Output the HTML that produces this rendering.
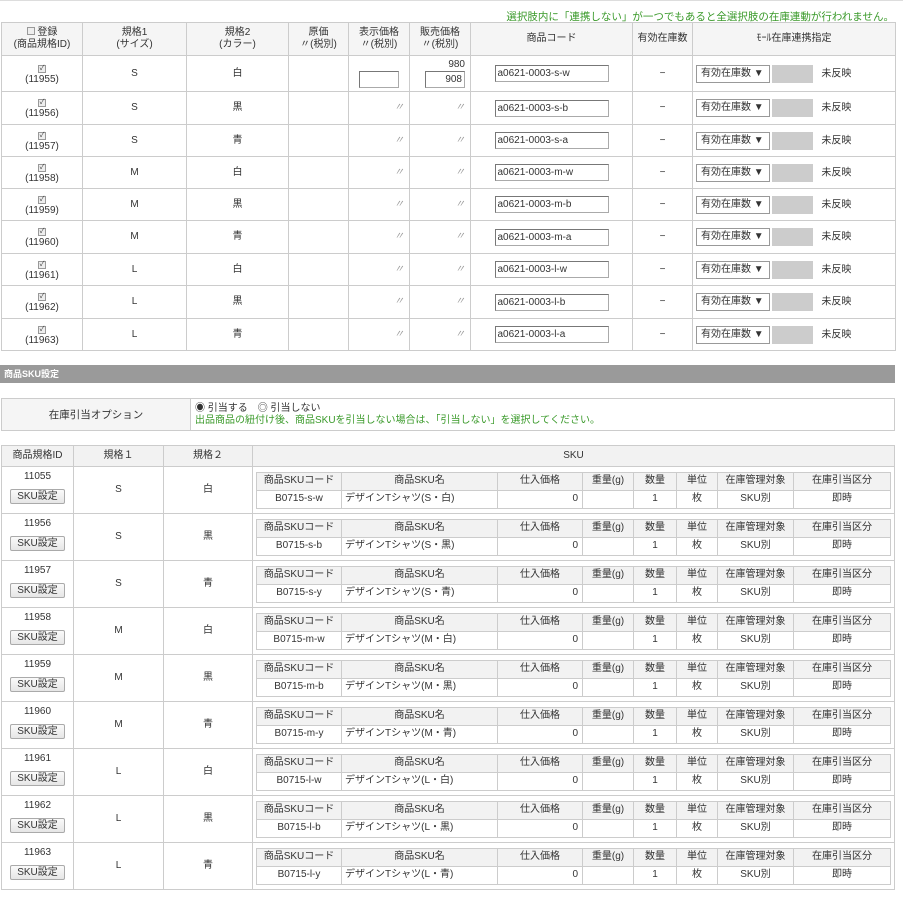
<!DOCTYPE html>
<html><head><meta charset="utf-8"><style>
*{box-sizing:border-box;margin:0;padding:0}
body{width:903px;height:900px;background:#fff;font-family:"Liberation Sans","Noto Sans CJK JP",sans-serif;font-size:10px;color:#333;position:relative;overflow:hidden}
table{border-collapse:collapse;table-layout:fixed;position:absolute}
td,th{border:1px solid #ccc;text-align:center;vertical-align:middle;font-weight:normal;line-height:12px}
.hl{position:absolute;left:0;top:0;width:903px;height:2px;border-top:1px solid #ddd}
.note{position:absolute;right:9px;top:9px;color:#3a9a2a;font-size:10.5px}
#t1 th{background:#f5f5f5}
.inp{display:inline-block;border:1px solid #aaa;border-top-color:#777;border-left-color:#777;background:#fff;height:17px;text-align:left;padding-left:2px;line-height:15px;font-size:10px;vertical-align:middle}
.sel{display:inline-block;width:74px;height:18px;border:1px solid #999;background:#fff;line-height:16px;padding-left:4px;text-align:left;vertical-align:middle}
.gray{display:inline-block;width:41px;height:18px;background:#ccc;vertical-align:middle;margin-left:2px}
.r{text-align:right;padding-right:5px;color:#999;font-style:italic}
.cb{display:inline-block;width:8px;height:8px;border:1px solid #999;background:#eee;font-size:7px;line-height:6px;color:#333}
.bar{position:absolute;left:0;top:365px;width:895px;height:18px;background:#9a9a9a;color:#fff;font-weight:bold;font-size:9px;line-height:18px;padding-left:4px}
#t3 th{background:#f2f2f2}
.in{position:static;width:634px;margin:0 auto 0 3px}
.in td{height:18px;border-color:#ccc}
.in tr:first-child td{background:#f2f2f2}
.btn{display:inline-block;border:1px solid #aaa;border-radius:2px;background:linear-gradient(#fafafa,#e6e6e6);padding:0 6px;height:15px;line-height:13px;font-size:10px;margin-top:6px}
</style></head><body>
<div class="hl"></div>
<div class="note">選択肢内に「連携しない」が一つでもあると全選択肢の在庫連動が行われません。</div>
<table id="t1" style="left:1px;top:22px;width:894px">
<colgroup><col style="width:81px"><col style="width:104px"><col style="width:102px"><col style="width:60px"><col style="width:61px"><col style="width:61px"><col style="width:162px"><col style="width:60px"><col style="width:203px"></colgroup>
<tr style="height:33px"><th><span class="cb"></span> 登録<br>(商品規格ID)</th><th>規格1<br>(サイズ)</th><th>規格2<br>(カラー)</th><th>原価<br>〃(税別)</th><th>表示価格<br>〃(税別)</th><th>販売価格<br>〃(税別)</th><th>商品コード</th><th>有効在庫数</th><th>ﾓｰﾙ在庫連携指定</th></tr>
<tr style="height:36px"><td><span class="cb">✓</span><br>(11955)</td><td>S</td><td>白</td><td></td><td><span class="inp" style="width:40px;margin-top:12px"></span></td><td style="text-align:right;padding-right:5px">980<br><span class="inp" style="width:40px;text-align:right;padding-right:2px">908</span></td><td><span class="inp" style="width:114px">a0621-0003-s-w</span></td><td>−</td><td style="text-align:left;padding-left:3px"><span class="sel">有効在庫数 ▼</span><span class="gray"></span>&nbsp;&nbsp;&nbsp;未反映</td></tr>
<tr style="height:33px"><td><span class="cb">✓</span><br>(11956)</td><td>S</td><td>黒</td><td></td><td class="r">〃</td><td class="r">〃</td><td><span class="inp" style="width:114px">a0621-0003-s-b</span></td><td>−</td><td style="text-align:left;padding-left:3px"><span class="sel">有効在庫数 ▼</span><span class="gray"></span>&nbsp;&nbsp;&nbsp;未反映</td></tr>
<tr style="height:32px"><td><span class="cb">✓</span><br>(11957)</td><td>S</td><td>青</td><td></td><td class="r">〃</td><td class="r">〃</td><td><span class="inp" style="width:114px">a0621-0003-s-a</span></td><td>−</td><td style="text-align:left;padding-left:3px"><span class="sel">有効在庫数 ▼</span><span class="gray"></span>&nbsp;&nbsp;&nbsp;未反映</td></tr>
<tr style="height:32px"><td><span class="cb">✓</span><br>(11958)</td><td>M</td><td>白</td><td></td><td class="r">〃</td><td class="r">〃</td><td><span class="inp" style="width:114px">a0621-0003-m-w</span></td><td>−</td><td style="text-align:left;padding-left:3px"><span class="sel">有効在庫数 ▼</span><span class="gray"></span>&nbsp;&nbsp;&nbsp;未反映</td></tr>
<tr style="height:32px"><td><span class="cb">✓</span><br>(11959)</td><td>M</td><td>黒</td><td></td><td class="r">〃</td><td class="r">〃</td><td><span class="inp" style="width:114px">a0621-0003-m-b</span></td><td>−</td><td style="text-align:left;padding-left:3px"><span class="sel">有効在庫数 ▼</span><span class="gray"></span>&nbsp;&nbsp;&nbsp;未反映</td></tr>
<tr style="height:33px"><td><span class="cb">✓</span><br>(11960)</td><td>M</td><td>青</td><td></td><td class="r">〃</td><td class="r">〃</td><td><span class="inp" style="width:114px">a0621-0003-m-a</span></td><td>−</td><td style="text-align:left;padding-left:3px"><span class="sel">有効在庫数 ▼</span><span class="gray"></span>&nbsp;&nbsp;&nbsp;未反映</td></tr>
<tr style="height:32px"><td><span class="cb">✓</span><br>(11961)</td><td>L</td><td>白</td><td></td><td class="r">〃</td><td class="r">〃</td><td><span class="inp" style="width:114px">a0621-0003-l-w</span></td><td>−</td><td style="text-align:left;padding-left:3px"><span class="sel">有効在庫数 ▼</span><span class="gray"></span>&nbsp;&nbsp;&nbsp;未反映</td></tr>
<tr style="height:33px"><td><span class="cb">✓</span><br>(11962)</td><td>L</td><td>黒</td><td></td><td class="r">〃</td><td class="r">〃</td><td><span class="inp" style="width:114px">a0621-0003-l-b</span></td><td>−</td><td style="text-align:left;padding-left:3px"><span class="sel">有効在庫数 ▼</span><span class="gray"></span>&nbsp;&nbsp;&nbsp;未反映</td></tr>
<tr style="height:32px"><td><span class="cb">✓</span><br>(11963)</td><td>L</td><td>青</td><td></td><td class="r">〃</td><td class="r">〃</td><td><span class="inp" style="width:114px">a0621-0003-l-a</span></td><td>−</td><td style="text-align:left;padding-left:3px"><span class="sel">有効在庫数 ▼</span><span class="gray"></span>&nbsp;&nbsp;&nbsp;未反映</td></tr>
</table>
<div class="bar">商品SKU設定</div>
<table style="left:1px;top:398px;width:894px">
<colgroup><col style="width:189px"><col></colgroup>
<tr style="height:32px"><td style="background:#f5f5f5;font-size:10.5px">在庫引当オプション</td><td style="text-align:left;padding-left:4px;border-left-color:#3a9a2a">◉ 引当する　◎ 引当しない<br><span style="color:#3a9a2a">出品商品の紐付け後、商品SKUを引当しない場合は、「引当しない」を選択してください。</span></td></tr>
</table>
<table id="t3" style="left:1px;top:445px;width:894px">
<colgroup><col style="width:72px"><col style="width:90px"><col style="width:89px"><col></colgroup>
<tr style="height:21px"><th>商品規格ID</th><th>規格１</th><th>規格２</th><th>SKU</th></tr>
</table>
<div id="rows"></div>
<script>
var d=[["11055","S","白","s-w","S・白"],["11956","S","黒","s-b","S・黒"],["11957","S","青","s-y","S・青"],["11958","M","白","m-w","M・白"],["11959","M","黒","m-b","M・黒"],["11960","M","青","m-y","M・青"],["11961","L","白","l-w","L・白"],["11962","L","黒","l-b","L・黒"],["11963","L","青","l-y","L・青"]];
var h='';
d.forEach(function(r){h+='<tr style="height:47px"><td style="vertical-align:top;padding-top:4px">'+r[0]+'<br><span class="btn">SKU設定</span></td><td>'+r[1]+'</td><td>'+r[2]+'</td><td style="padding:0"><table class="in"><colgroup><col style="width:85px"><col style="width:156px"><col style="width:85px"><col style="width:51px"><col style="width:43px"><col style="width:41px"><col style="width:76px"><col style="width:97px"></colgroup><tr><td>商品SKUコード</td><td>商品SKU名</td><td>仕入価格</td><td>重量(g)</td><td>数量</td><td>単位</td><td>在庫管理対象</td><td>在庫引当区分</td></tr><tr><td>B0715-'+r[3]+'</td><td style="text-align:left;padding-left:3px">デザインTシャツ('+r[4]+')</td><td style="text-align:right;padding-right:4px">0</td><td></td><td>1</td><td>枚</td><td>SKU別</td><td>即時</td></tr></table></td></tr>';});
var t=document.getElementById('t3');t.insertAdjacentHTML('beforeend',h);
</script>
</body></html>
